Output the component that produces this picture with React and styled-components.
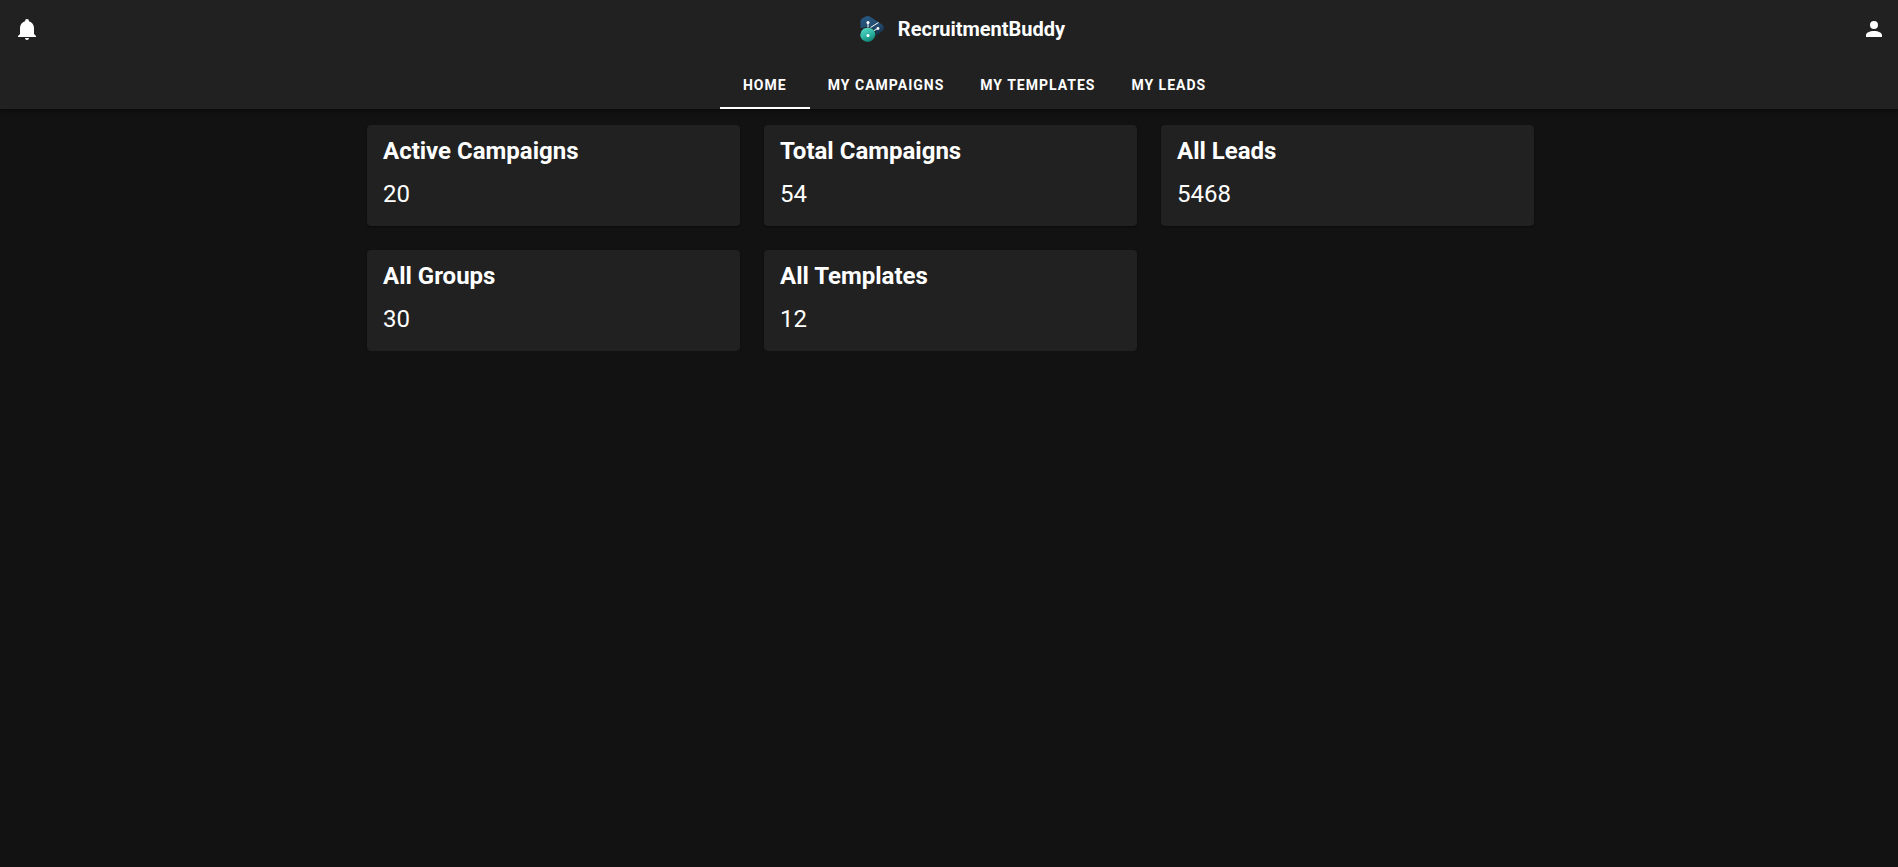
import React from "react";
import styled, { createGlobalStyle } from "styled-components";

const GlobalStyle = createGlobalStyle`
  * { box-sizing: border-box; }
  body {
    margin: 0;
    background: #121212;
    color: #fff;
    font-family: Roboto, "Liberation Sans", sans-serif;
  }
`;

const Header = styled.header`
  background: #212121;
  box-shadow: 0 2px 4px rgba(0, 0, 0, 0.4);
`;

const TopBar = styled.div`
  display: flex;
  align-items: center;
  justify-content: space-between;
  height: 58px;
  padding-left: 3px;
`;

const IconButton = styled.button`
  display: grid;
  place-items: center;
  width: 48px;
  height: 48px;
  padding: 0;
  border: 0;
  border-radius: 50%;
  background: transparent;
  color: #fff;
  cursor: pointer;

  svg {
    width: 24px;
    height: 24px;
    fill: currentColor;
  }
`;

const Brand = styled.div`
  display: flex;
  align-items: center;
  gap: 13px;
  padding-left: 24px;
  font-size: 20px;
  font-weight: 700;
  line-height: 24px;
`;

const Tabs = styled.nav`
  display: flex;
  justify-content: center;
  padding: 3px 0 0 46px;
`;

const Tab = styled.a`
  display: flex;
  align-items: center;
  justify-content: center;
  min-width: 90px;
  height: 48px;
  padding: 2px 18px 0;
  border-bottom: 2px solid ${(p) => (p.$active ? "#fff" : "transparent")};
  color: #fff;
  font-size: 14px;
  font-weight: 700;
  letter-spacing: 1px;
  text-decoration: none;
  text-transform: uppercase;
`;

const Main = styled.main`
  display: grid;
  grid-template-columns: repeat(3, 1fr);
  gap: 24px;
  max-width: 1170px;
  margin: 0 auto;
  padding: 16px 0 0 3px;
`;

const Card = styled.section`
  padding: 10px 16px 16px;
  border-radius: 4px;
  background: #212121;
  box-shadow: 0 1px 2px rgba(0, 0, 0, 0.4);
`;

const CardTitle = styled.h2`
  margin: 0;
  font-size: 24px;
  font-weight: 700;
  line-height: 32px;
`;

const CardValue = styled.p`
  margin: 11px 0 0;
  font-size: 24px;
  line-height: 32px;
`;

const BellIcon = () => (
  <svg viewBox="0 0 24 24" aria-hidden="true">
    <path d="M21,19V20H3V19L5,17V11C5,7.9 7.03,5.17 10,4.29C10,4.19 10,4.1 10,4A2,2 0 0,1 12,2A2,2 0 0,1 14,4C14,4.1 14,4.19 14,4.29C16.97,5.17 19,7.9 19,11V17L21,19M14,21A2,2 0 0,1 12,23A2,2 0 0,1 10,21" />
  </svg>
);

const AccountIcon = () => (
  <svg viewBox="0 0 24 24" aria-hidden="true">
    <path d="M12,4A4,4 0 0,1 16,8A4,4 0 0,1 12,12A4,4 0 0,1 8,8A4,4 0 0,1 12,4M12,14C16.42,14 20,15.79 20,18V20H4V18C4,15.79 7.58,14 12,14Z" />
  </svg>
);

const Logo = () => (
  <svg width="25" height="26" viewBox="0 0 25 26" aria-hidden="true">
    <defs>
      <linearGradient id="teal" x1="0.3" y1="0.1" x2="0.7" y2="0.9">
        <stop offset="0" stopColor="#4fd1bf" />
        <stop offset="0.5" stopColor="#2fb5a4" />
        <stop offset="1" stopColor="#128577" />
      </linearGradient>
      <linearGradient id="navy" x1="0.3" y1="0" x2="0.7" y2="1">
        <stop offset="0" stopColor="#27577f" />
        <stop offset="0.6" stopColor="#214a6d" />
        <stop offset="1" stopColor="#152a3d" />
      </linearGradient>
    </defs>
    <path
      fill="url(#navy)"
      d="M0.5 12V5.5Q0.5 3.5 2.2 2.4L5 0.8Q7.8 -0.6 10.5 0.9L22 8.6Q25.6 11.6 22.6 15.2L15 20.5Z"
    />
    <path fill="#212121" d="M0.5 12.6Q3.5 10.8 8 11L12 11.8L15.6 15.5L16 20H13Z" />
    <path
      fill="url(#teal)"
      d="M3.5 12.7Q7.8 10.6 12.2 12.7Q15.4 15 15.3 19Q15 22.2 12 24.6Q7.8 27.4 3.6 24.6Q0.3 22.2 0.3 18.7Q0.5 14.8 3.5 12.7Z"
    />
    <path stroke="#fff" strokeWidth="1" fill="none" d="M8 7V11.5M10.5 11.5L18.5 6.5M14 14.6L18 12.4" />
    <circle cx="8" cy="6.5" r="1.5" fill="#fff" />
    <circle cx="18" cy="12.5" r="1.4" fill="#fff" />
    <circle cx="8" cy="19.5" r="1.5" fill="#fff" />
  </svg>
);

const tabs = ["Home", "My Campaigns", "My Templates", "My Leads"];

const stats = [
  { title: "Active Campaigns", value: 20 },
  { title: "Total Campaigns", value: 54 },
  { title: "All Leads", value: 5468 },
  { title: "All Groups", value: 30 },
  { title: "All Templates", value: 12 },
];

export default function App() {
  return (
    <>
      <GlobalStyle />
      <Header>
        <TopBar>
          <IconButton type="button" aria-label="Notifications">
            <BellIcon />
          </IconButton>
          <Brand>
            <Logo />
            <span>RecruitmentBuddy</span>
          </Brand>
          <IconButton type="button" aria-label="Account">
            <AccountIcon />
          </IconButton>
        </TopBar>
        <Tabs>
          {tabs.map((name, i) => (
            <Tab key={name} href="#" $active={i === 0} aria-current={i === 0 ? "page" : undefined}>
              {name}
            </Tab>
          ))}
        </Tabs>
      </Header>
      <Main>
        {stats.map((s) => (
          <Card key={s.title}>
            <CardTitle>{s.title}</CardTitle>
            <CardValue>{s.value}</CardValue>
          </Card>
        ))}
      </Main>
    </>
  );
}
